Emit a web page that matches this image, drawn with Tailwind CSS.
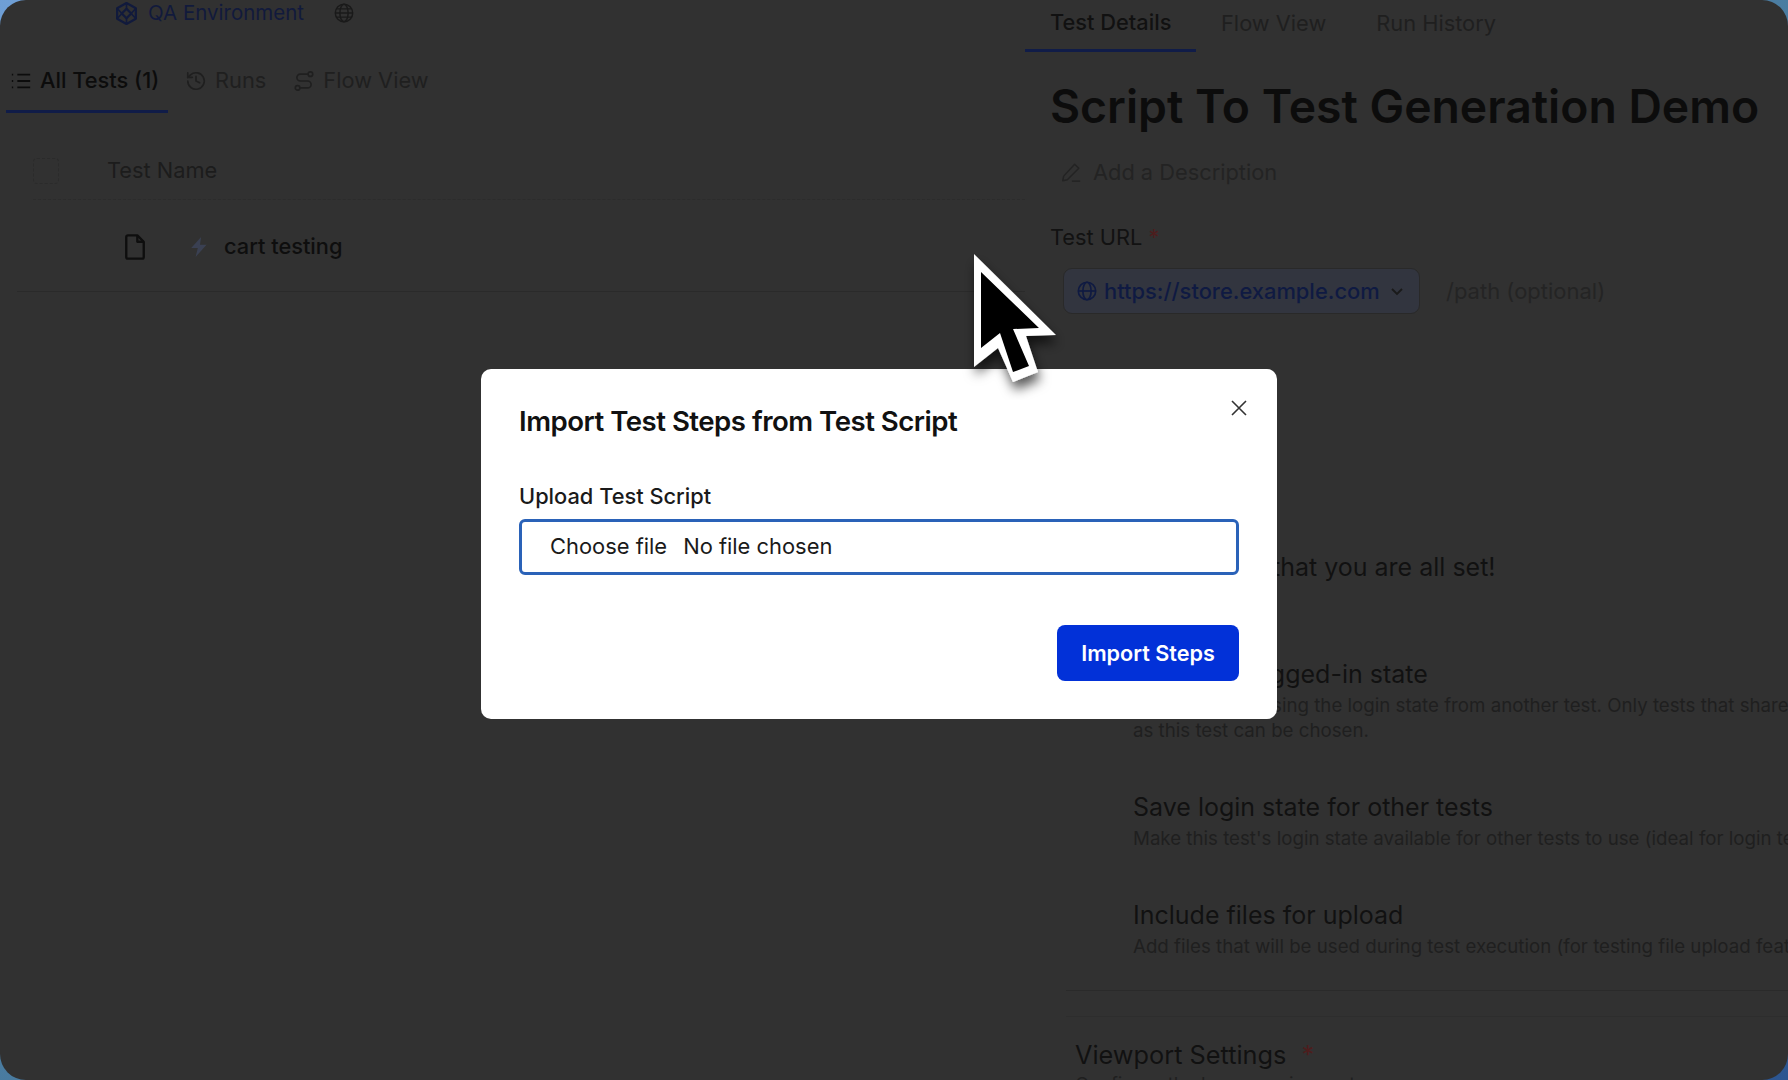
<!DOCTYPE html>
<html lang="en">
  <head>
    <meta charset="UTF-8">
    <title>Import Test Steps</title>
    <script src="https://cdn.jsdelivr.net/npm/@tailwindcss/browser@4"></script>
  </head>
  <body class="relative w-[1788px] h-[1080px] overflow-hidden bg-[linear-gradient(150deg,#6f9fd6,#4a7ca0_50%,#2c5590)] font-['Inter','Liberation_Sans',sans-serif]">
    <div class="flex w-full h-full rounded-[26px] bg-[#313131] overflow-hidden">

      <!-- left pane -->
      <div class="w-[1025px] shrink-0 flex flex-col">
        <div class="flex items-center h-[26px] pl-[114px] gap-[5px] text-[#111a3c]">
          <svg class="w-[25px] h-[25px]" viewBox="0 0 24 24" fill="none" stroke="currentColor" stroke-width="2.200" stroke-linejoin="round">
            <path d="M12 2 21 7v10l-9 5-9-5V7z"/>
            <path d="M12 7.500 16.500 12 12 16.500 7.500 12z"/>
            <path d="M12 2v5.500M12 16.500V22M3 7l4.500 5L3 17M21 7l-4.500 5 4.500 5" stroke-width="1.600"/>
          </svg>
          <span class="text-[20.500px] ml-[4px]">QA Environment</span>
          <svg class="w-[22px] h-[22px] ml-[24px] text-[#1a1a1a]" viewBox="0 0 24 24" fill="none" stroke="currentColor" stroke-width="1.600">
            <circle cx="12" cy="12" r="9.500"/>
            <ellipse cx="12" cy="12" rx="4.500" ry="9.500"/>
            <path d="M2.500 12h19M3.800 7.500h16.400M3.800 16.500h16.400"/>
          </svg>
        </div>

        <div class="flex mt-[30px] ml-[6px] h-[57px] text-[21.800px]">
          <div class="flex items-center gap-[8px] w-[162px] pl-[4px] pb-[5px] h-[57px] border-b-[3px] border-[#101c48] text-[#0c0c0c] font-medium">
            <svg class="w-[22px] h-[22px]" viewBox="0 0 24 24" fill="none" stroke="currentColor" stroke-width="2">
              <path d="M8 5h14M8 12h14M8 19h14M2 5h1.500M2 12h1.500M2 19h1.500"/>
            </svg>
            <span>All Tests (1)</span>
          </div>
          <div class="flex items-center gap-[8px] ml-[17px] pb-[5px] h-[54px] text-[#1f1f1f]">
            <svg class="w-[22px] h-[22px]" viewBox="0 0 24 24" fill="none" stroke="currentColor" stroke-width="1.800" stroke-linecap="round">
              <path d="M3 12a9 9 0 1 0 3-6.700L3 8"/>
              <path d="M3 3v5h5M12 7v5l4 2"/>
            </svg>
            <span>Runs</span>
          </div>
          <div class="flex items-center gap-[8px] ml-[27px] pb-[5px] h-[54px] text-[#1f1f1f]">
            <svg class="w-[22px] h-[22px]" viewBox="0 0 24 24" fill="none" stroke="currentColor" stroke-width="1.800">
              <circle cx="19" cy="4.500" r="2.500"/>
              <circle cx="5" cy="19.500" r="2.500"/>
              <path d="M16.500 4.500H8a3.700 3.700 0 0 0 0 7.500h8a3.700 3.700 0 0 1 0 7.500H7.500"/>
            </svg>
            <span>Flow View</span>
          </div>
        </div>

        <div class="flex items-center h-[90px] pt-[32px] mt-[-3px] ml-[33px] border-b border-dashed border-[#2c2c2c]">
          <div class="w-[26px] h-[26px] rounded-[4px] border border-dashed border-[#2b2b2b]"></div>
          <span class="ml-[48px] text-[21.800px] text-[#1c1c1c]">Test Name</span>
        </div>

        <div class="flex items-center h-[92px] pt-[2px] ml-[17px] border-b border-[#2a2a2a]">
          <svg class="w-[28px] h-[28px] ml-[104px] text-[#0e0e0e]" viewBox="0 0 24 24" fill="none" stroke="currentColor" stroke-width="2" stroke-linejoin="round">
            <path d="M14 2H6a1.500 1.500 0 0 0-1.500 1.500v17A1.500 1.500 0 0 0 6 22h12a1.500 1.500 0 0 0 1.500-1.500V7.500z"/>
            <path d="M14 2v5.500h5.500"/>
          </svg>
          <svg class="w-[22px] h-[22px] ml-[40px] text-[#3a4052]" viewBox="0 0 20 20" fill="currentColor">
            <path d="M11 1 2 11h6l-2 8 10-11h-6z"/>
          </svg>
          <span class="ml-[13px] text-[21.800px] font-medium text-[#0e0e0e]">cart testing</span>
        </div>
      </div>

      <!-- right pane -->
      <div class="flex-1 flex flex-col min-w-0">
        <div class="flex text-[21.800px] h-[52px]">
          <div class="w-[171px] h-[52px] border-b-[3px] border-[#101c48] pl-[25px] pt-[6px] text-[#111] font-medium">Test Details</div>
          <div class="ml-[25px] pt-[7px] text-[#1f1f1f]">Flow View</div>
          <div class="ml-[50px] pt-[7px] text-[#1f1f1f]">Run History</div>
        </div>

        <div class="pl-[25px]">
          <h1 class="mt-[26px] text-[46.300px] leading-[56px] font-semibold text-[#0c0c0c] whitespace-nowrap">Script To Test Generation Demo</h1>

          <div class="flex items-center gap-[11px] mt-[22px] ml-[10px] text-[#232323] text-[21.800px]">
            <svg class="w-[22px] h-[22px]" viewBox="0 0 24 24" fill="none" stroke="currentColor" stroke-width="1.600" stroke-linejoin="round">
              <path d="M16 3.500 20.500 8 8 20.500l-5 1 1-5z"/>
              <path d="M13 22h9"/>
            </svg>
            <span>Add a Description</span>
          </div>

          <div class="mt-[32px] text-[21.800px] text-[#121212]">Test URL <span class="text-[#4d1d1d]">*</span></div>

          <div class="flex items-center mt-[15px] ml-[13px]">
            <div class="flex items-center w-[357px] h-[46px] pl-[12px] rounded-[9px] border border-[#292929] bg-[#32353f] text-[#0f1a42]">
              <svg class="w-[22px] h-[22px] shrink-0" viewBox="0 0 24 24" fill="none" stroke="currentColor" stroke-width="1.800">
                <circle cx="12" cy="12" r="9.500"/>
                <ellipse cx="12" cy="12" rx="4.500" ry="9.500"/>
                <path d="M2.500 12h19"/>
              </svg>
              <span class="ml-[6px] text-[21.900px] font-medium whitespace-nowrap">https://store.example.com</span>
              <svg class="w-[16px] h-[16px] ml-[9px] text-[#1a1a1a]" viewBox="0 0 16 16" fill="none" stroke="currentColor" stroke-width="1.800">
                <path d="m3 6 5 5 5-5"/>
              </svg>
            </div>
            <span class="ml-[26px] text-[22px] text-[#242424]">/path (optional)</span>
          </div>

          <div class="mt-[237px] ml-[222px] h-[32px] text-[25px] leading-[32px] text-[#111] whitespace-nowrap">that you are all set!</div>

          <div class="mt-[75px] ml-[83px] w-[800px] whitespace-nowrap overflow-hidden">
            <div class="text-[25px] leading-[32px] text-[#111]">Use valid logged-in state</div>
            <p class="mt-[3px] text-[18.700px] leading-[25px] text-[#1f1f1f]">Start a test by using the login state from another test. Only tests that share the same URL<br>as this test can be chosen.</p>

            <div class="mt-[48px] text-[25px] leading-[32px] text-[#111]">Save login state for other tests</div>
            <p class="mt-[3px] text-[18.700px] leading-[25px] text-[#1f1f1f]">Make this test's login state available for other tests to use (ideal for login tests)</p>

            <div class="mt-[48px] text-[25px] leading-[32px] text-[#111]">Include files for upload</div>
            <p class="mt-[3px] text-[18.700px] leading-[25px] text-[#1f1f1f]">Add files that will be used during test execution (for testing file upload features)</p>
          </div>

          <div class="mt-[31px] ml-[16px] border-t border-[#2a2a2a]"></div>
          <div class="mt-[25px] ml-[16px] border-t border-[#2d2d2d]"></div>

          <div class="mt-[22px] ml-[25px] text-[25.300px] leading-[32px] text-[#111]">Viewport Settings <span class="ml-[8px] text-[#4d1d1d]">*</span></div>
          <p class="mt-[1px] ml-[25px] text-[18.700px] leading-[25px] text-[#1f1f1f]">Configure the browser viewport</p>
        </div>
      </div>
    </div>

    <!-- modal -->
    <div class="absolute left-[481px] top-[369px] w-[796px] h-[350px] rounded-[10px] bg-white">
      <button class="absolute right-[28px] top-[29px] text-[#333]">
        <svg class="w-[20px] h-[20px]" viewBox="0 0 20 20" fill="none" stroke="currentColor" stroke-width="1.600">
          <path d="m3 3 14 14M17 3 3 17"/>
        </svg>
      </button>
      <div class="pt-[34px] px-[38px]">
        <h2 class="text-[27.600px] leading-[36px] font-semibold text-[#111] tracking-[-0.5px]">Import Test Steps from Test Script</h2>
        <div class="mt-[43px] text-[21.800px] leading-[28px] font-medium text-[#1a1a1a]">Upload Test Script</div>
        <div class="flex items-center mt-[9px] h-[56px] pl-[28px] pb-[2px] rounded-[6px] border-[3px] border-[#2a62b8] text-[21.900px] text-[#1a1a1a]">
          <span>Choose file</span>
          <span class="ml-[16px]">No file chosen</span>
        </div>
        <div class="flex justify-end mt-[50px]">
          <button class="w-[182px] h-[56px] rounded-[8px] bg-[#0231d8] text-white text-[21.600px] font-semibold">Import Steps</button>
        </div>
      </div>
    </div>

    <!-- cursor -->
    <svg class="absolute left-[960px] top-[240px] w-[110px] h-[160px]" viewBox="0 0 110 160">
      <defs>
        <filter id="cursor-shadow" x="-30%" y="-30%" width="170%" height="170%">
          <feDropShadow dx="2" dy="8" stdDeviation="6" flood-color="#000" flood-opacity="0.650"/>
        </filter>
      </defs>
      <path d="M14 14 96 95 66 96 78 132 53 142 38 108 14 127Z" fill="#fff" filter="url(#cursor-shadow)"/>
      <path d="M21 32V108L40 93 53 132 69 126 53 89 79 88Z" fill="#000"/>
    </svg>
  </body>
</html>
